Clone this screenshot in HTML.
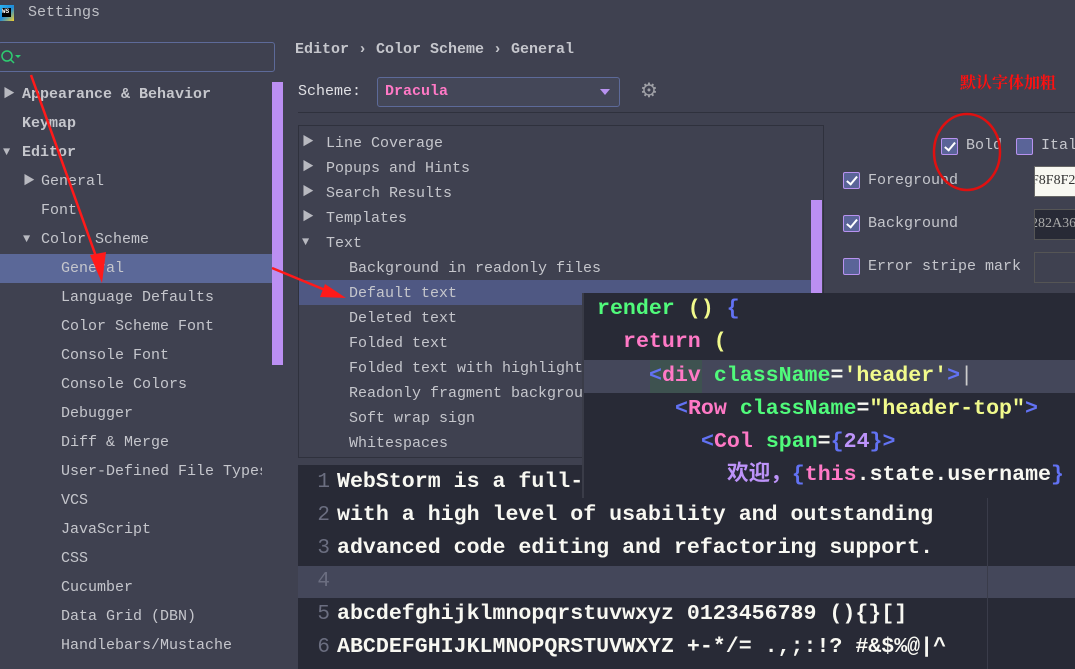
<!DOCTYPE html>
<html><head><meta charset="utf-8"><style>
*{margin:0;padding:0;box-sizing:border-box}
body{width:1075px;height:669px;overflow:hidden;background:#3f4150;font-family:"Liberation Mono","Noto Sans CJK SC",monospace;color:#c5c6cc;font-size:15px;position:relative}
.a{position:absolute;white-space:nowrap}
.t{line-height:29px;height:29px}
.r{line-height:25px;height:25px}
.tri{font-size:12px;color:#b8b9c0}
.code{font-family:"Liberation Mono","Noto Sans CJK SC",monospace;font-weight:bold;font-size:21.6px;line-height:33px;height:33px}
.ln{font-family:"Liberation Mono",monospace;font-size:21px;line-height:33px;height:33px;color:#6b6e80;width:14px;text-align:right}
.cb{position:absolute;width:17px;height:17px;border:1px solid #b892f0;background:#5a6498;border-radius:2px}
.cb.on::after{content:"";position:absolute;left:5px;top:1px;width:4px;height:9px;border:solid #fff;border-width:0 2px 2px 0;transform:rotate(40deg)}
</style></head><body>
<!-- title -->
<div class="a" style="left:0;top:5px;width:14px;height:16px;background:linear-gradient(135deg,#2bb3f0,#1e8ad8 50%,#f5d02a);"></div>
<div class="a" style="left:2px;top:8px;width:9px;height:9px;background:#000;color:#fff;font-size:6px;line-height:7px;font-weight:bold">WS</div>
<div class="a" style="left:28px;top:4px;font-size:15px;color:#bfc0c6">Settings</div>
<!-- search -->
<div class="a" style="left:-2px;top:42px;width:277px;height:30px;border:1px solid #5d6a99;border-radius:3px;background:#3f4150"></div>
<svg class="a" style="left:0;top:48px" width="24" height="18"><circle cx="7" cy="8" r="5" fill="none" stroke="#2ecc71" stroke-width="1.5"/><line x1="10.5" y1="11.5" x2="14" y2="15" stroke="#2ecc71" stroke-width="1.5"/><path d="M15 7h6l-3 3z" fill="#2ecc71"/></svg>
<!-- left tree -->
<div class="a" style="left:0;top:254px;width:272px;height:29px;background:#5b6898"></div>
<div class="a" style="left:272px;top:82px;width:11px;height:283px;background:#bb8ff2"></div>
<div class="a t tri" style="left:3px;top:80px">▶</div><div class="a t" style="left:22px;top:80px;font-weight:bold">Appearance &amp; Behavior</div>
<div class="a t" style="left:22px;top:109px;font-weight:bold">Keymap</div>
<div class="a t tri" style="left:3px;top:138px">▼</div><div class="a t" style="left:22px;top:138px;font-weight:bold">Editor</div>
<div class="a t tri" style="left:23px;top:167px">▶</div><div class="a t" style="left:41px;top:167px">General</div>
<div class="a t" style="left:41px;top:196px">Font</div>
<div class="a t tri" style="left:23px;top:225px">▼</div><div class="a t" style="left:41px;top:225px">Color Scheme</div>
<div class="a t" style="left:61px;top:254px">General</div>
<div class="a t" style="left:61px;top:283px">Language Defaults</div>
<div class="a t" style="left:61px;top:312px">Color Scheme Font</div>
<div class="a t" style="left:61px;top:341px">Console Font</div>
<div class="a t" style="left:61px;top:370px">Console Colors</div>
<div class="a t" style="left:61px;top:399px">Debugger</div>
<div class="a t" style="left:61px;top:428px">Diff &amp; Merge</div>
<div class="a t" style="left:61px;top:457px;width:201px;overflow:hidden">User-Defined File Types</div>
<div class="a t" style="left:61px;top:486px">VCS</div>
<div class="a t" style="left:61px;top:515px">JavaScript</div>
<div class="a t" style="left:61px;top:544px">CSS</div>
<div class="a t" style="left:61px;top:573px">Cucumber</div>
<div class="a t" style="left:61px;top:602px">Data Grid (DBN)</div>
<div class="a t" style="left:61px;top:631px">Handlebars/Mustache</div>
<!-- right header -->
<div class="a" style="left:295px;top:41px;font-weight:bold;color:#c5c6cc">Editor › Color Scheme › General</div>
<div class="a" style="left:298px;top:83px;color:#e0e0e4">Scheme:</div>
<div class="a" style="left:377px;top:77px;width:243px;height:30px;border:1px solid #5d6a99;border-radius:3px;background:#444758"></div>
<div class="a" style="left:385px;top:83px;color:#ff79c6;font-weight:bold">Dracula</div>
<div class="a" style="left:600px;top:89px;width:0;height:0;border-left:5px solid transparent;border-right:5px solid transparent;border-top:6px solid #b892f0"></div>
<div class="a" style="left:640px;top:78px;font-size:20px;color:#9fa0a6">⚙</div>
<div class="a" style="left:298px;top:112px;width:777px;height:1px;background:#2f313d"></div>
<!-- tree box -->
<div class="a" style="left:298px;top:125px;width:526px;height:333px;border:1px solid #2f313d;background:#3f4150"></div>
<div class="a" style="left:299px;top:280px;width:512px;height:25px;background:#4f5883"></div>
<div class="a" style="left:811px;top:200px;width:11px;height:100px;background:#bb8ff2"></div>
<div class="a r tri" style="left:302px;top:130px">▶</div><div class="a r" style="left:326px;top:131px">Line Coverage</div>
<div class="a r tri" style="left:302px;top:155px">▶</div><div class="a r" style="left:326px;top:156px">Popups and Hints</div>
<div class="a r tri" style="left:302px;top:180px">▶</div><div class="a r" style="left:326px;top:181px">Search Results</div>
<div class="a r tri" style="left:302px;top:205px">▶</div><div class="a r" style="left:326px;top:206px">Templates</div>
<div class="a r tri" style="left:302px;top:230px">▼</div><div class="a r" style="left:326px;top:231px">Text</div>
<div class="a r" style="left:349px;top:256px">Background in readonly files</div>
<div class="a r" style="left:349px;top:281px">Default text</div>
<div class="a r" style="left:349px;top:306px">Deleted text</div>
<div class="a r" style="left:349px;top:331px">Folded text</div>
<div class="a r" style="left:349px;top:356px">Folded text with highlight</div>
<div class="a r" style="left:349px;top:381px">Readonly fragment background</div>
<div class="a r" style="left:349px;top:406px">Soft wrap sign</div>
<div class="a r" style="left:349px;top:431px">Whitespaces</div>
<!-- right options -->
<div class="cb on" style="left:941px;top:138px"></div><div class="a" style="left:966px;top:137px">Bold</div>
<div class="cb" style="left:1016px;top:138px"></div><div class="a" style="left:1041px;top:137px">Italic</div>
<div class="cb on" style="left:843px;top:172px"></div><div class="a" style="left:868px;top:172px">Foreground</div>
<div class="a" style="left:1034px;top:166px;width:50px;height:31px;background:#f8f8f2;border:1px solid #666;color:#333;font-family:'Liberation Serif',serif;font-size:14px;padding:6px 0 0 0;overflow:hidden;text-indent:-4px">F8F8F2</div>
<div class="cb on" style="left:843px;top:215px"></div><div class="a" style="left:868px;top:215px">Background</div>
<div class="a" style="left:1034px;top:209px;width:50px;height:31px;background:#282a36;border:1px solid #555;color:#aaa;font-family:'Liberation Serif',serif;font-size:14px;padding:6px 0 0 0;overflow:hidden;text-indent:-4px">282A36</div>
<div class="cb" style="left:843px;top:258px"></div><div class="a" style="left:868px;top:258px">Error stripe mark</div>
<div class="a" style="left:1034px;top:252px;width:50px;height:31px;border:1px solid #555"></div>
<!-- editor -->
<div class="a" style="left:298px;top:465px;width:777px;height:204px;background:#282a36"></div>
<div class="a" style="left:298px;top:566px;width:777px;height:32px;background:#44475a"></div>
<div class="a" style="left:987px;top:465px;width:1px;height:204px;background:#3a3c4a"></div>
<div class="a ln" style="left:316px;top:466px">1</div><div class="a code" style="left:337px;top:466px;color:#f8f8f2">WebStorm is a full-</div>
<div class="a ln" style="left:316px;top:499px">2</div><div class="a code" style="left:337px;top:499px;color:#f8f8f2">with a high level of usability and outstanding</div>
<div class="a ln" style="left:316px;top:532px">3</div><div class="a code" style="left:337px;top:532px;color:#f8f8f2">advanced code editing and refactoring support.</div>
<div class="a ln" style="left:316px;top:565px">4</div>
<div class="a ln" style="left:316px;top:598px">5</div><div class="a code" style="left:337px;top:598px;color:#f8f8f2">abcdefghijklmnopqrstuvwxyz 0123456789 (){}[]</div>
<div class="a ln" style="left:316px;top:631px">6</div><div class="a code" style="left:337px;top:631px;color:#f8f8f2">ABCDEFGHIJKLMNOPQRSTUVWXYZ +-*/= .,;:!? #&amp;$%@|^</div>
<!-- popup -->
<div class="a" style="left:582px;top:293px;width:493px;height:205px;background:#282a36;border-left:2px solid #3a3c48;overflow:hidden">
 <div class="a" style="left:0;top:67px;width:493px;height:33px;background:#44475a"></div>
 <div class="a" style="left:66px;top:67px;width:52px;height:33px;background:#3a5a4a;opacity:.6"></div>
 <div class="a code" style="left:13px;top:0"><span style="color:#50fa7b">render</span> <span style="color:#f1fa8c">()</span> <span style="color:#6272f4">{</span></div>
 <div class="a code" style="left:39px;top:33px"><span style="color:#ff79c6">return</span> <span style="color:#f1fa8c">(</span></div>
 <div class="a code" style="left:65px;top:67px"><span style="color:#6272f4">&lt;</span><span style="color:#ff79c6">div</span> <span style="color:#50fa7b">className</span><span style="color:#f8f8f2">=</span><span style="color:#f1fa8c">'header'</span><span style="color:#6272f4">&gt;</span><span style="color:#ccc;font-weight:normal">|</span></div>
 <div class="a code" style="left:91px;top:100px"><span style="color:#6272f4">&lt;</span><span style="color:#ff79c6">Row</span> <span style="color:#50fa7b">className</span><span style="color:#f8f8f2">=</span><span style="color:#f1fa8c">"header-top"</span><span style="color:#6272f4">&gt;</span></div>
 <div class="a code" style="left:117px;top:133px"><span style="color:#6272f4">&lt;</span><span style="color:#ff79c6">Col</span> <span style="color:#50fa7b">span</span><span style="color:#f8f8f2">=</span><span style="color:#6272f4">{</span><span style="color:#bd93f9">24</span><span style="color:#6272f4">}&gt;</span></div>
 <div class="a code" style="left:143px;top:166px"><span style="color:#bd93f9">欢迎，</span><span style="color:#6272f4">{</span><span style="color:#ff79c6">this</span><span style="color:#f8f8f2">.state.username</span><span style="color:#6272f4">}</span></div>
</div>
<!-- annotations -->
<div class="a" style="left:960px;top:70px;color:#ff1010;font-family:'Noto Serif CJK SC',serif;font-size:16px;font-weight:bold">默认字体加粗</div>
<svg class="a" style="left:0;top:0" width="1075" height="669">
<ellipse cx="967" cy="152" rx="33" ry="38" fill="none" stroke="#e01010" stroke-width="2.5"/>
<line x1="31" y1="75" x2="98" y2="262" stroke="#ff1a1a" stroke-width="2.5"/>
<path d="M90 255 L102 283 L106 252 Z" fill="#ff1a1a"/>
<line x1="272" y1="268" x2="330" y2="292" stroke="#ff1a1a" stroke-width="2.5"/>
<path d="M325 284 L346 298 L320 297 Z" fill="#ff1a1a"/>
</svg>
</body></html>
